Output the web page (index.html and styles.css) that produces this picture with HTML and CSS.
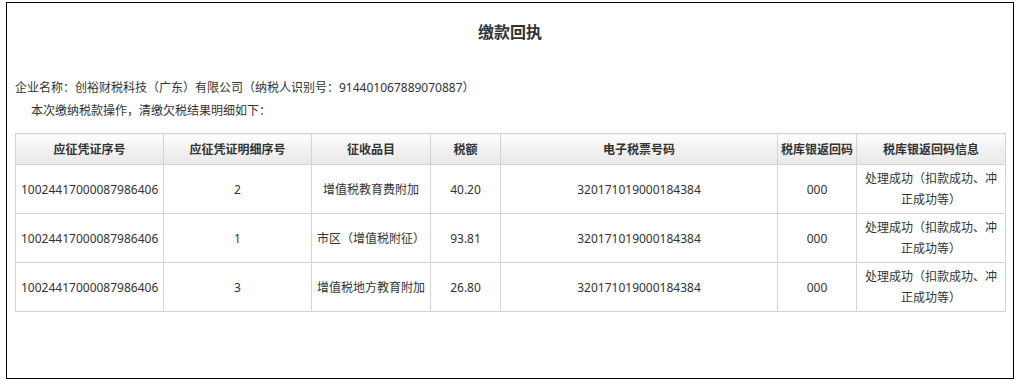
FILE: index.html
```html
<!DOCTYPE html>
<html lang="zh-CN">
<head>
<meta charset="utf-8">
<title>缴款回执</title>
<link rel="stylesheet" href="styles.css">
</head>
<body>
<div class="receipt">
  <h1 class="receipt-title">缴款回执</h1>
  <p class="company">企业名称：创裕财税科技（广东）有限公司（纳税人识别号：914401067889070887）</p>
  <p class="intro">本次缴纳税款操作，清缴欠税结果明细如下：</p>
  <table class="detail">
    <colgroup>
      <col class="c1"><col class="c2"><col class="c3"><col class="c4"><col class="c5"><col class="c6"><col class="c7">
    </colgroup>
    <thead>
      <tr>
        <th>应征凭证序号</th>
        <th>应征凭证明细序号</th>
        <th>征收品目</th>
        <th>税额</th>
        <th>电子税票号码</th>
        <th>税库银返回码</th>
        <th>税库银返回码信息</th>
      </tr>
    </thead>
    <tbody>
      <tr>
        <td>10024417000087986406</td>
        <td>2</td>
        <td>增值税教育费附加</td>
        <td>40.20</td>
        <td>320171019000184384</td>
        <td>000</td>
        <td>处理成功（扣款成功、冲正成功等）</td>
      </tr>
      <tr>
        <td>10024417000087986406</td>
        <td>1</td>
        <td>市区（增值税附征）</td>
        <td>93.81</td>
        <td>320171019000184384</td>
        <td>000</td>
        <td>处理成功（扣款成功、冲正成功等）</td>
      </tr>
      <tr>
        <td>10024417000087986406</td>
        <td>3</td>
        <td>增值税地方教育附加</td>
        <td>26.80</td>
        <td>320171019000184384</td>
        <td>000</td>
        <td>处理成功（扣款成功、冲正成功等）</td>
      </tr>
    </tbody>
  </table>
</div>
</body>
</html>
```

FILE: styles.css
```css
html, body {
  margin: 0;
  padding: 0;
  background: #fff;
}

body {
  font-family: "Noto Sans", "Noto Sans CJK SC", sans-serif;
  font-size: 12px;
  color: #333;
}

.receipt {
  box-sizing: border-box;
  width: 1008px;
  height: 377px;
  margin: 2px 0 0 6px;
  border: 1px solid #000;
  padding: 17px 8px 0 8px;
}

.receipt-title {
  margin: 0;
  font-size: 16px;
  line-height: 24px;
  font-weight: bold;
  text-align: center;
  color: #333;
}

.company {
  margin: 32px 0 0 0;
  line-height: 23px;
}

.intro {
  margin: 0;
  padding-left: 16px;
  line-height: 23px;
}

.detail {
  margin-top: 11px;
  width: 990px;
  table-layout: fixed;
  border-collapse: collapse;
}

.c1 { width: 148px; }
.c2 { width: 148px; }
.c3 { width: 119px; }
.c4 { width: 70px; }
.c5 { width: 277px; }
.c6 { width: 79px; }
.c7 { width: 149px; }

.detail th,
.detail td {
  border: 1px solid #d3d3d3;
  text-align: center;
  padding: 0 5px;
  color: #333;
}

.detail th {
  height: 30px;
  padding: 0 2px;
  white-space: nowrap;
  font-weight: bold;
  background: linear-gradient(to bottom, #ffffff 0%, #f4f4f4 35%, #e9e9e9 100%);
}

.detail td {
  height: 48px;
  line-height: 21px;
}
```
